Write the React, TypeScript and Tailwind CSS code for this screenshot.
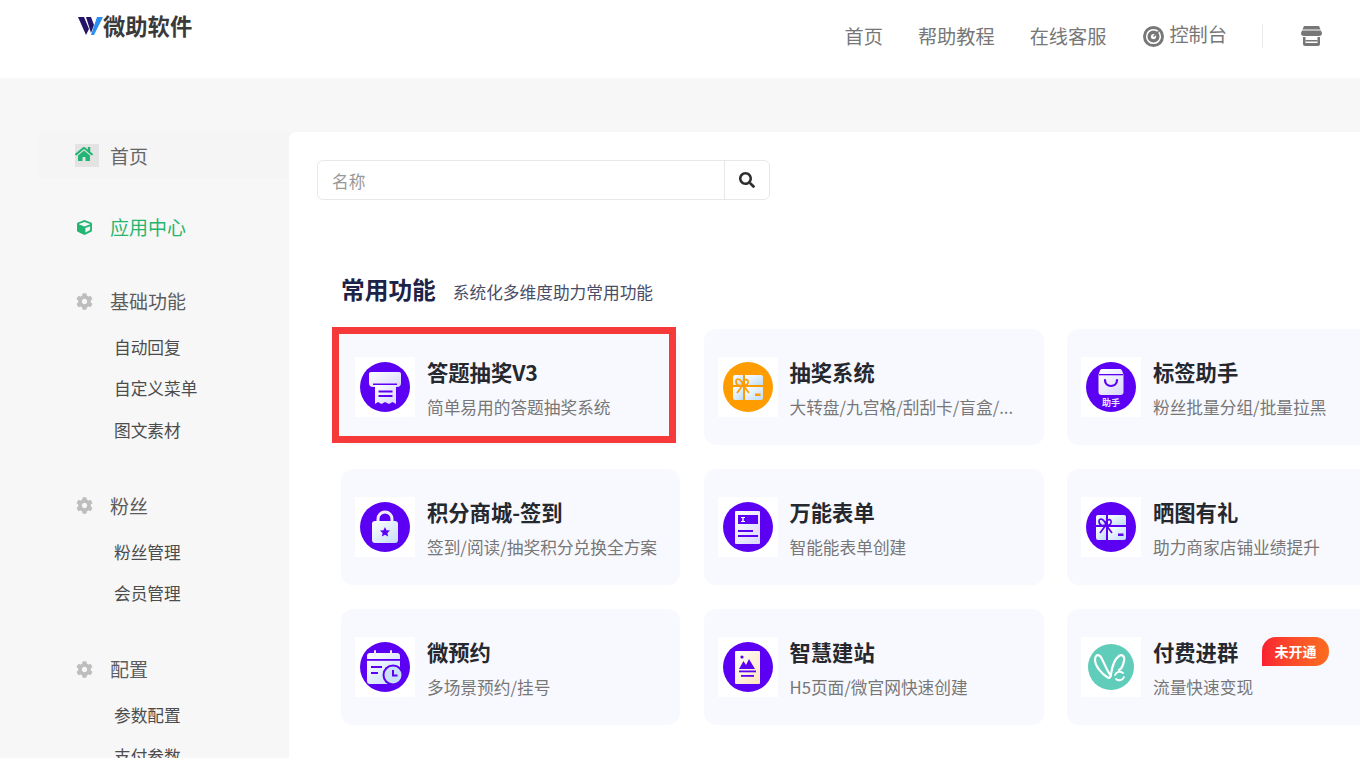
import React from "react";
import { FaCog, FaCube, FaHome, FaSearch } from "react-icons/fa";

const P = "#5c00f4";

function Grad({ id, to = "#d9d6fb" }: { id: string; to?: string }) {
  return (
    <defs>
      <linearGradient id={id} x1="0" y1="0" x2="1" y2="1">
        <stop offset="0" stopColor="#ffffff" />
        <stop offset="1" stopColor={to} />
      </linearGradient>
    </defs>
  );
}

function Base({ children, fill = P }: { children: React.ReactNode; fill?: string }) {
  return (
    <svg viewBox="0 0 50 50" className="w-[50px] h-[50px]">
      <circle cx="25" cy="25" r="25" fill={fill} />
      {children}
    </svg>
  );
}

function PrinterIcon() {
  return (
    <Base>
      <Grad id="g1" />
      <path d="M11 10h28a2 2 0 0 1 2 2v9a4 4 0 0 1-4 4H13a4 4 0 0 1-4-4v-9a2 2 0 0 1 2-2z" fill="url(#g1)" />
      <path d="M13 21.5h24v1.5H13z" fill={P} />
      <path d="M15 23h21v19l-3.5-2-3.500 2-4-2-3.500 2-3.500-2-3 2z" fill="url(#g1)" />
      <rect x="18.500" y="28.500" width="14" height="2" fill={P} />
      <rect x="18.500" y="33" width="14" height="2" fill={P} />
    </Base>
  );
}

function GiftIcon({ fill, id }: { fill: string; id: string }) {
  return (
    <Base fill={fill}>
      <Grad id={id} to="#bfdcf5" />
      <path d="M12 13h8v10H10V15a2 2 0 0 1 2-2z" fill={`url(#${id})`} />
      <path d="M22 13h16a2 2 0 0 1 2 2v8H22z" fill={`url(#${id})`} />
      <path d="M10 25h10v13h-8a2 2 0 0 1-2-2z" fill={`url(#${id})`} />
      <path d="M22 25h18v11a2 2 0 0 1-2 2H22z" fill={`url(#${id})`} />
      <path d="M20 23c-3 1-7 1-7-4 0-3 5-3 7 4zM20 23c3 1 6-1 5-4-1-3-6-1-5 4zM20 23l-6 8M20 23l6 8" fill="none" stroke={fill} strokeWidth="1.700" />
      <rect x="32" y="31.500" width="5.500" height="2.500" fill={fill} />
    </Base>
  );
}

function BagIcon() {
  return (
    <Base>
      <Grad id="g3" />
      <path d="M16 7h18a2 2 0 0 1 2 1.500l1.500 4V30a3 3 0 0 1-3 3H15.500a3 3 0 0 1-3-3V12.500l1.500-4A2 2 0 0 1 16 7z" fill="url(#g3)" />
      <rect x="13" y="12" width="24" height="1.300" fill={P} />
      <path d="M19 18c0 8 12 8 12 0" fill="none" stroke={P} strokeWidth="2.200" strokeLinecap="round" />
      <text x="25" y="43.500" textAnchor="middle" fontSize="9" fill="#e8e4ff" fontWeight="700" fontFamily="'Noto Sans CJK SC', sans-serif">助手</text>
    </Base>
  );
}

function LockIcon() {
  return (
    <Base>
      <Grad id="g4" to="#c5dcf7" />
      <path d="M18 21v-4a7 7 0 0 1 14 0v4" fill="none" stroke="#f0effd" strokeWidth="3" />
      <path d="M15 19h20a3 3 0 0 1 3 3v16a3 3 0 0 1-3 3H15a3 3 0 0 1-3-3V22a3 3 0 0 1 3-3z" fill="url(#g4)" />
      <path d="M25 25l1.500 3.200 3.500.400-2.600 2.400.700 3.500-3.100-1.700-3.100 1.700.700-3.500-2.600-2.400 3.500-.400z" fill={P} />
    </Base>
  );
}

function FormIcon() {
  return (
    <Base>
      <Grad id="g5" />
      <rect x="12" y="9" width="25" height="33" rx="1" fill="url(#g5)" />
      <rect x="15" y="13" width="20" height="9" fill={P} />
      <path d="M18 15h4v1h-1.300v3H22v1h-4v-1h1.300v-3H18z" fill="#fff" />
      <rect x="15" y="28" width="15" height="2" fill={P} />
      <rect x="15" y="33" width="20" height="2" fill={P} />
    </Base>
  );
}

function CalendarIcon() {
  return (
    <Base>
      <Grad id="g6" to="#c5dcf7" />
      <path d="M10 11h27a3 3 0 0 1 3 3v19a9 9 0 0 1-9 9H10a3 3 0 0 1-3-3V14a3 3 0 0 1 3-3z" fill="url(#g6)" />
      <rect x="14" y="8" width="2" height="7" rx="1" fill="#efeefd" />
      <rect x="30" y="8" width="2" height="7" rx="1" fill="#efeefd" />
      <rect x="7" y="17" width="33" height="1.800" fill={P} />
      <rect x="11" y="24" width="11" height="2" fill={P} />
      <rect x="11" y="30" width="7" height="2" fill={P} />
      <circle cx="33" cy="33" r="10.500" fill={P} />
      <circle cx="33" cy="33" r="8.500" fill="#c9def7" />
      <path d="M33 28v5.500h4.500" fill="none" stroke={P} strokeWidth="2" />
    </Base>
  );
}

function SiteIcon() {
  return (
    <Base>
      <Grad id="g7" to="#fde3bd" />
      <rect x="12" y="9" width="25" height="33" rx="1" fill="url(#g7)" />
      <circle cx="19" cy="15" r="1.600" fill={P} />
      <path d="M16 27l4.500-8 2.500 4 3-6 6 10z" fill={P} />
      <rect x="16" y="28.500" width="17" height="1.800" fill={P} />
      <rect x="18" y="33" width="13" height="1.800" fill={P} />
    </Base>
  );
}

function GroupIcon() {
  return (
    <svg viewBox="0 0 50 50" className="w-[50px] h-[50px]">
      <circle cx="25" cy="25" r="23" fill="#5fcdb9" />
      <path d="M25 34C20 28 17 17 14 14c-3-2-5 0-5 4 0 6 7 14 12 17 3 2 4 0 3-3M25 32c1-7 4-15 8-18 3-2 6 0 5 5-1 5-3 8-5 9" fill="none" stroke="#fff" strokeWidth="2.200" strokeLinecap="round" strokeLinejoin="round" />
      <path d="M29 33a5 5 0 0 1 8-2M38 35a5 5 0 0 1-8 2" fill="none" stroke="#fff" strokeWidth="1.800" strokeLinecap="round" />
    </svg>
  );
}

const cards: { title: string; desc: string; icon: React.ReactNode; badge?: boolean; boxed?: boolean }[] = [
  { title: "答题抽奖V3", desc: "简单易用的答题抽奖系统", icon: <PrinterIcon />, boxed: true },
  { title: "抽奖系统", desc: "大转盘/九宫格/刮刮卡/盲盒/...", icon: <GiftIcon fill="#ff9c00" id="g2a" /> },
  { title: "标签助手", desc: "粉丝批量分组/批量拉黑", icon: <BagIcon /> },
  { title: "积分商城-签到", desc: "签到/阅读/抽奖积分兑换全方案", icon: <LockIcon /> },
  { title: "万能表单", desc: "智能能表单创建", icon: <FormIcon /> },
  { title: "晒图有礼", desc: "助力商家店铺业绩提升", icon: <GiftIcon fill={P} id="g2b" /> },
  { title: "微预约", desc: "多场景预约/挂号", icon: <CalendarIcon /> },
  { title: "智慧建站", desc: "H5页面/微官网快速创建", icon: <SiteIcon /> },
  { title: "付费进群", desc: "流量快速变现", icon: <GroupIcon />, badge: true },
];

function Card({ title, desc, icon, badge, boxed }: (typeof cards)[number]) {
  return (
    <div className="relative h-[116px] rounded-xl bg-[#f8f9fe] pl-[14px] flex items-center gap-[12px]">
      <div className="w-[60px] h-[60px] bg-white flex items-center justify-center shrink-0">{icon}</div>
      <div className="min-w-0 pt-[5px] whitespace-nowrap">
        <div className="text-[21.300px] leading-[30px] font-bold text-[#25282e]">{title}</div>
        <div className="mt-[5px] text-[16.700px] leading-[30px] text-[#777]">{desc}</div>
      </div>
      {badge && (
        <span className="absolute left-[195px] top-[28px] w-[67px] h-[29px] rounded-t-[14px] rounded-br-[14px] bg-gradient-to-r from-[#fa1f30] to-[#fb6c1e] text-white text-[14px] font-bold flex items-center justify-center">
          未开通
        </span>
      )}
      {boxed && (
        <span className="absolute left-[-9px] top-[-2px] w-[344px] h-[116px] border-[7px] border-[#f63a3a]" />
      )}
    </div>
  );
}

function SideHead({ icon, label, active }: { icon: React.ReactNode; label: string; active?: boolean }) {
  return (
    <div className={`h-[46px] flex items-center pl-[36px] gap-[17px] text-[19px] ${active ? "text-[#26b56d]" : "text-[#5c5c5c]"}`}>
      <span className="w-[18px] flex items-center justify-center">{icon}</span>
      <span>{label}</span>
    </div>
  );
}

function SubItem({ label }: { label: string }) {
  return <div className="h-[41.300px] flex items-center pl-[75px] text-[16.700px] text-[#4c4c4c]">{label}</div>;
}

const gear = <FaCog className="text-[#bdbdbd] text-[17px]" />;

export default function App() {
  return (
    <div className="w-[1360px] h-[758px] overflow-hidden bg-[#f7f7f7] font-['Noto_Sans_CJK_SC','Noto_Sans',sans-serif]">
      <header className="h-[78px] bg-white flex justify-between pl-[78px] pr-[38px]">
        <div className="flex items-center h-[52px]">
          <svg viewBox="0 0 25 20" className="w-[25px] h-[20px]">
            <path d="M0 1h6l5 12-3 6z" fill="#241468" />
            <path d="M8 1h5l3 8-3 8z" fill="#241468" />
            <path d="M13 19L19 1h6l-9 18z" fill="#2b8ff0" />
          </svg>
          <span className="text-[22.300px] font-bold text-[#3a3a3a]">微助软件</span>
        </div>
        <nav className="flex items-center h-[72px] text-[19.200px] text-[#777]">
          <span>首页</span>
          <span className="ml-[35px]">帮助教程</span>
          <span className="ml-[35px]">在线客服</span>
          <svg viewBox="0 0 20 20" className="ml-[37px] w-[21px] h-[21px]">
            <circle cx="10" cy="10" r="10" fill="#777" />
            <circle cx="10" cy="10" r="6.500" fill="none" stroke="#fff" strokeWidth="1.500" />
            <circle cx="10" cy="10" r="2.500" fill="#fff" />
            <path d="M10 10l5-5" stroke="#777" strokeWidth="1.500" />
          </svg>
          <span className="ml-[5px] -mt-[3px]">控制台</span>
          <span className="ml-[35px] w-px h-[24px] bg-[#eaeaea]" />
          <svg viewBox="0 0 21 20" className="ml-[38px] w-[21px] h-[20px]">
            <path d="M3 0h15l3 7a3 3 0 0 1-3 3H3a3 3 0 0 1-3-3z" fill="#777" />
            <path d="M2 11h2.500v6h12v-6H19v7a2 2 0 0 1-2 2H4a2 2 0 0 1-2-2z" fill="#777" />
            <rect x="4.500" y="14" width="12" height="1.500" fill="#777" />
            <path d="M0 4h21" stroke="#fff" strokeWidth="1" />
          </svg>
        </nav>
      </header>
      <div className="flex pt-[54px] h-[680px]">
        <aside className="w-[289px] shrink-0">
          <div className="ml-[39px] bg-[#f5f5f5] h-[46px] flex items-center pl-[36px] gap-[11px] text-[19px] text-[#666]">
            <span className="w-[24px] h-[23px] bg-[#e3e3e3] flex items-center pb-[2px]">
              <FaHome className="text-[#22b573] text-[18px]" />
            </span>
            <span className="pt-[2px]">首页</span>
          </div>
          <div className="mt-[26px] ml-[39px]">
            <SideHead active label="应用中心" icon={<FaCube className="text-[#22b573] text-[15px]" />} />
          </div>
          <div className="mt-[28px] ml-[39px]">
            <SideHead label="基础功能" icon={gear} />
            <div className="mt-[3px]">
              <SubItem label="自动回复" />
              <SubItem label="自定义菜单" />
              <SubItem label="图文素材" />
            </div>
          </div>
          <div className="mt-[32px] ml-[39px]">
            <SideHead label="粉丝" icon={gear} />
            <div className="mt-[3px]">
              <SubItem label="粉丝管理" />
              <SubItem label="会员管理" />
            </div>
          </div>
          <div className="mt-[32px] ml-[39px]">
            <SideHead label="配置" icon={gear} />
            <div className="mt-[2px]">
              <SubItem label="参数配置" />
              <SubItem label="支付参数" />
            </div>
          </div>
        </aside>
        <main className="flex-1 min-w-0 bg-white rounded-tl-lg pt-[28px] pl-[28px] overflow-hidden">
          <div className="w-[453px] h-[40px] border border-[#e8e8e8] rounded-md flex">
            <input
              placeholder="名称"
              className="flex-1 min-w-0 pl-[14px] pt-[3px] text-[16.700px] outline-none bg-transparent placeholder:text-[#999]"
            />
            <button className="w-[45px] border-l border-[#e8e8e8] flex items-center justify-center">
              <FaSearch className="text-[#2f2f2f] text-[16px]" />
            </button>
          </div>
          <div className="mt-[71px] ml-[24px] flex items-baseline gap-[17px]">
            <h2 className="text-[23.700px] leading-[36px] font-bold text-[#1d2348]">常用功能</h2>
            <span className="text-[16.700px] text-[#4a4d66]">系统化多维度助力常用功能</span>
          </div>
          <div className="mt-[22px] ml-[24px] grid grid-cols-[339px_340px_340px] gap-x-[23.500px] gap-y-[24px]">
            {cards.map((c) => (
              <Card key={c.title} {...c} />
            ))}
          </div>
        </main>
      </div>
    </div>
  );
}
